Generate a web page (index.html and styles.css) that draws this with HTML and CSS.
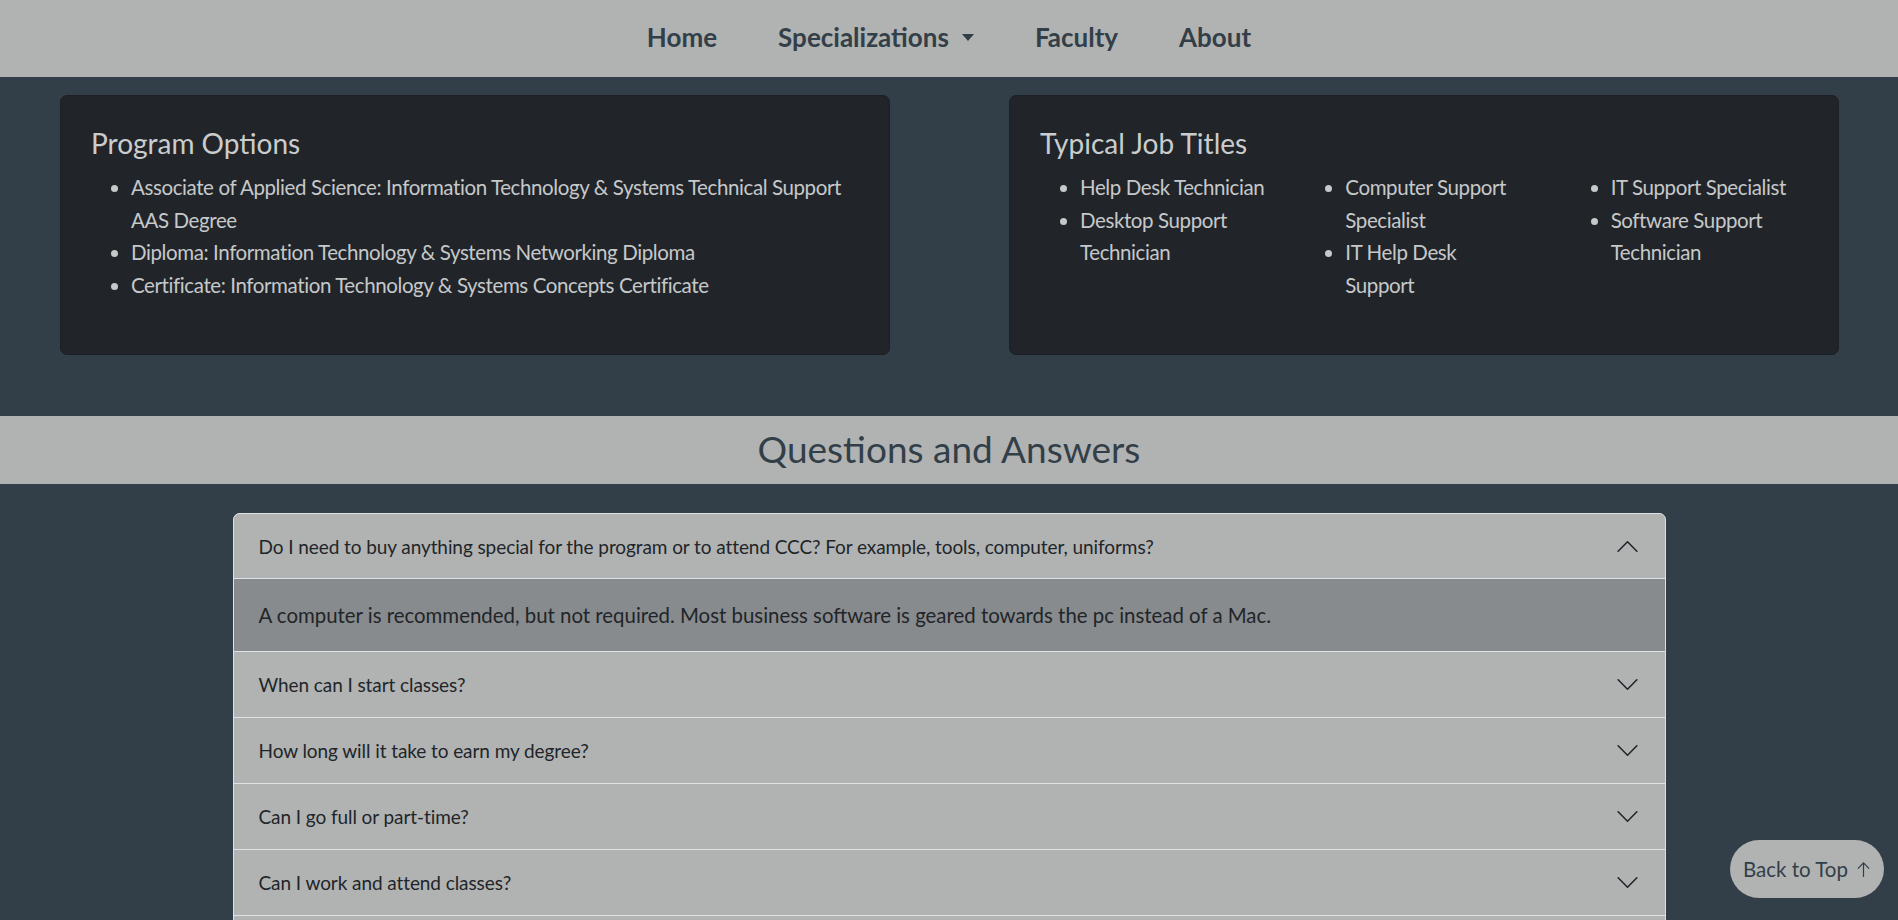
FILE: index.html
```html
<!DOCTYPE html>
<html lang="en">
<head>
<meta charset="utf-8">
<title>Information Technology &amp; Systems</title>
<link rel="stylesheet" href="styles.css">
</head>
<body>
<nav class="topnav">
  <a class="nav-link" href="#">Home</a>
  <a class="nav-link dropdown" href="#">Specializations<span class="caret"></span></a>
  <a class="nav-link" href="#">Faculty</a>
  <a class="nav-link" href="#">About</a>
</nav>

<section class="info">
  <div class="card">
    <h4 class="card-title">Program Options</h4>
    <ul class="card-list">
      <li>Associate of Applied Science: Information Technology &amp; Systems Technical Support AAS Degree</li>
      <li>Diploma: Information Technology &amp; Systems Networking Diploma</li>
      <li>Certificate: Information Technology &amp; Systems Concepts Certificate</li>
    </ul>
  </div>
  <div class="card">
    <h4 class="card-title">Typical Job Titles</h4>
    <ul class="card-list cols">
      <li>Help Desk Technician</li>
      <li>Desktop Support Technician</li>
      <li>Computer Support Specialist</li>
      <li>IT Help Desk<br>Support</li>
      <li>IT Support Specialist</li>
      <li>Software Support Technician</li>
    </ul>
  </div>
</section>

<div class="band">
  <h2 class="band-title">Questions and Answers</h2>
</div>

<section class="faq">
  <div class="accordion">
    <div class="acc-item">
      <button class="acc-btn open">
        <span>Do I need to buy anything special for the program or to attend CCC? For example, tools, computer, uniforms?</span>
        <svg class="chev up" viewBox="0 0 16 16"><path d="M2 5L8 11L14 5"/></svg>
      </button>
      <div class="acc-body">A computer is recommended, but not required. Most business software is geared towards the pc instead of a Mac.</div>
    </div>
    <div class="acc-item">
      <button class="acc-btn"><span>When can I start classes?</span><svg class="chev" viewBox="0 0 16 16"><path d="M2 5L8 11L14 5"/></svg></button>
    </div>
    <div class="acc-item">
      <button class="acc-btn"><span>How long will it take to earn my degree?</span><svg class="chev" viewBox="0 0 16 16"><path d="M2 5L8 11L14 5"/></svg></button>
    </div>
    <div class="acc-item">
      <button class="acc-btn"><span>Can I go full or part-time?</span><svg class="chev" viewBox="0 0 16 16"><path d="M2 5L8 11L14 5"/></svg></button>
    </div>
    <div class="acc-item">
      <button class="acc-btn"><span>Can I work and attend classes?</span><svg class="chev" viewBox="0 0 16 16"><path d="M2 5L8 11L14 5"/></svg></button>
    </div>
    <div class="acc-item">
      <button class="acc-btn"><span>Is financial aid available?</span><svg class="chev" viewBox="0 0 16 16"><path d="M2 5L8 11L14 5"/></svg></button>
    </div>
  </div>
</section>

<a class="back-top" href="#">Back to Top <svg class="arrow" viewBox="0 0 16 18"><path d="M8 17V2M2 8L8 2L14 8"/></svg></a>
</body>
</html>
```

FILE: styles.css
```css
* { box-sizing: border-box; }

html, body {
  margin: 0;
  padding: 0;
}

body {
  background: #333f48;
  font-family: Lato, "Noto Sans", sans-serif;
  color: #212529;
  overflow: hidden;
}

.topnav {
  height: 77px;
  background: #b1b3b3;
  display: flex;
  justify-content: center;
  align-items: center;
  gap: 61px;
  padding-bottom: 2px;
}

.nav-link {
  font-size: 26px;
  font-weight: 700;
  color: #333f48;
  text-decoration: none;
  line-height: 1.2;
  display: flex;
  align-items: center;
}

.caret {
  display: inline-block;
  margin-left: 13px;
  width: 0;
  height: 0;
  border-top: 7px solid #333f48;
  border-left: 6.5px solid transparent;
  border-right: 6.5px solid transparent;
}

.info {
  display: flex;
  justify-content: space-between;
  padding: 18px 59px 61px 60px;
}

.card {
  width: 830px;
  background: #212529;
  border: 1px solid #1c1f23;
  border-radius: 7px;
  padding: 29px 30px 31px;
  color: #c6c8ca;
}

.card-title {
  margin: 0 0 10px;
  font-size: 28px;
  font-weight: 400;
  line-height: 36px;
  color: #caccce;
}

.card-list {
  margin: 0 0 22px;
  padding-left: 40px;
  font-size: 20.5px;
  letter-spacing: -0.4px;
  line-height: 32.5px;
}

.card-list.cols {
  column-count: 3;
  column-gap: 68px;
}

.card-list.cols li {
  break-inside: avoid;
}

.band {
  background: #b1b3b3;
  padding: 9px 0 11px;
  text-align: center;
}

.band-title {
  margin: 0;
  font-size: 37px;
  font-weight: 400;
  line-height: 48px;
  color: #333f48;
}

.faq {
  padding-top: 29px;
  display: flex;
  justify-content: center;
}

.accordion {
  width: 1433px;
  background: #b1b3b3;
  border-radius: 7px 7px 0 0;
}

.acc-item {
  border: 1px solid #dee2e6;
  border-top: 0;
}

.acc-item:first-child {
  border-top: 1px solid #dee2e6;
  border-radius: 7px 7px 0 0;
}

.acc-btn {
  width: 100%;
  height: 65px;
  display: flex;
  align-items: center;
  justify-content: space-between;
  background: #b1b3b3;
  border: 0;
  padding: 0 25px;
  font-family: inherit;
  font-size: 19px;
  letter-spacing: -0.08px;
  line-height: 24px;
  color: #212529;
  text-align: left;
}

.acc-item:first-child .acc-btn {
  border-radius: 6px 6px 0 0;
}

.acc-btn.open {
  box-shadow: inset 0 -1px 0 #dee2e6;
}

.chev {
  width: 25px;
  height: 25px;
  flex: none;
  fill: none;
  stroke: #212529;
  stroke-width: 1;
  stroke-linecap: round;
  stroke-linejoin: round;
}

.chev.up {
  transform: rotate(180deg);
}

.acc-body {
  background: #888b8d;
  padding: 20px 25px;
  font-size: 20.4px;
  line-height: 32px;
  color: #212529;
}

.back-top {
  position: fixed;
  right: 14px;
  bottom: 22px;
  width: 154px;
  height: 58px;
  border-radius: 29px;
  background: #b1b3b3;
  color: #333f48;
  text-decoration: none;
  font-size: 20.5px;
  display: flex;
  align-items: center;
  justify-content: center;
  gap: 8px;
}

.arrow {
  width: 15px;
  height: 17px;
  fill: none;
  stroke: #333f48;
  stroke-width: 1.3;
}
```
